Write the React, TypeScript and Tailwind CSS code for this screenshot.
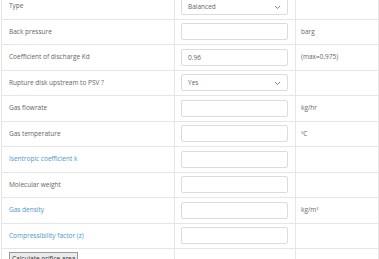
import React from 'react';

type Row = {
  label: string;
  link?: boolean;
  kind: 'input' | 'select';
  value?: string;
  unit?: React.ReactNode;
};

const rows: Row[] = [
  { label: 'Type', kind: 'select', value: 'Balanced' },
  { label: 'Back pressure', kind: 'input', unit: 'barg' },
  { label: 'Coefficient of discharge Kd', kind: 'input', value: '0.96', unit: '(max=0.975)' },
  { label: 'Rupture disk upstream to PSV ?', kind: 'select', value: 'Yes' },
  { label: 'Gas flowrate', kind: 'input', unit: 'kg/hr' },
  { label: 'Gas temperature', kind: 'input', unit: <span><sup className="text-[4px]">0</sup>C</span> },
  { label: 'Isentropic coefficient k', link: true, kind: 'input' },
  { label: 'Molecular weight', kind: 'input' },
  { label: 'Gas density', link: true, kind: 'input', unit: <span>kg/m<sup className="text-[4px]">3</sup></span> },
  { label: 'Compressibility factor (z)', link: true, kind: 'input' },
];

function Chevron() {
  return (
    <svg width="7" height="5" viewBox="0 0 7 5" className="absolute right-[6px] top-[6px]">
      <path d="M1 1 L3.5 3.5 L6 1" fill="none" stroke="#777" strokeWidth="0.9" />
    </svg>
  );
}

export default function App() {
  return (
    <div className="w-[379px] h-[259px] overflow-hidden bg-white" style={{ fontFamily: '"Open Sans", sans-serif' }}>
      <table className="-mt-[7px] ml-[1px] w-[378px] border-collapse text-[6.5px] text-[#666]">
        <tbody>
          {rows.map((r, i) => (
            <tr key={i} className="h-[25.5px]">
              <td className="w-[173px] border border-[#e6e6e6] pl-[7px]">
                <span className={r.link ? 'text-[#4a97c9]' : ''}>{r.label}</span>
              </td>
              <td className="w-[121px] border border-[#e6e6e6] px-[6px]">
                <div className="relative h-[17px] w-[107px] rounded-[2px] border border-[#dcdcdc] bg-white pl-[6px] leading-[15px]">
                  {r.value}
                  {r.kind === 'select' && <Chevron />}
                </div>
              </td>
              <td className="border border-[#e6e6e6] pl-[5px]">{r.unit}</td>
            </tr>
          ))}
          <tr className="h-[25.5px]">
            <td className="border border-[#e6e6e6] pl-[7px] align-top pt-[3px]">
              <button className="h-[13px] border border-[#999] bg-[#ebebeb] px-[2px] text-[6.5px] leading-[11px] text-[#333]" style={{ fontFamily: '"Open Sans", sans-serif' }}>
                Calculate orifice area
              </button>
            </td>
            <td className="border border-[#e6e6e6]" />
            <td className="border border-[#e6e6e6]" />
          </tr>
        </tbody>
      </table>
    </div>
  );
}
